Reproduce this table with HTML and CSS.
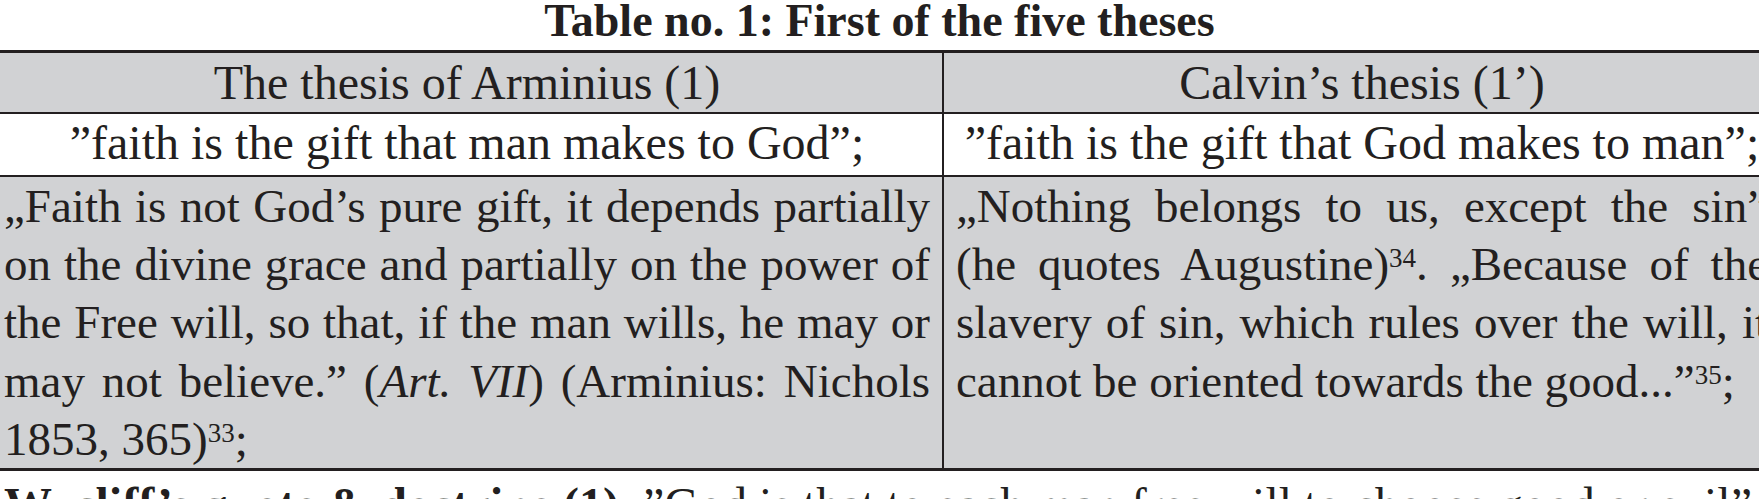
FILE: index.html
```html
<!DOCTYPE html>
<html lang="en">
<head>
<meta charset="utf-8">
<title>Table no. 1: First of the five theses</title>
<link rel="stylesheet" href="styles.css">
</head>
<body>
<div class="page">
  <h1 class="caption">Table no. 1: First of the five theses</h1>
  <div class="tbl">
    <div class="row head">
      <div class="cell">The thesis of Arminius (1)</div>
      <div class="cell">Calvin’s thesis (1’)</div>
    </div>
    <div class="row short">
      <div class="cell">”faith is the gift that man makes to God”;</div>
      <div class="cell">”faith is the gift that God makes to man”;</div>
    </div>
    <div class="row body">
      <div class="cell">
        <span class="ln">„Faith is not God’s pure gift, it depends partially</span>
        <span class="ln">on the divine grace and partially on the power of</span>
        <span class="ln">the Free will, so that, if the man wills, he may or</span>
        <span class="ln">may not believe.” (<i>Art. VII</i>) (Arminius: Nichols</span>
        <span class="ln end">1853, 365)<sup class="fn">33</sup>;</span>
      </div>
      <div class="cell">
        <span class="ln">„Nothing belongs to us, except the sin”</span>
        <span class="ln">(he quotes Augustine)<sup class="fn">34</sup>. „Because of the</span>
        <span class="ln">slavery of sin, which rules over the will, it</span>
        <span class="ln end">cannot be oriented towards the good...”<sup class="fn">35</sup>;</span>
      </div>
    </div>
  </div>
  <p class="after"><b>Wycliff’s quote &amp; doctrine (1).</b> ”God is that to each man free will to choose good or evil”.</p>
</div>
</body>
</html>
```
FILE: styles.css
```css
html, body {
  margin: 0;
  padding: 0;
  background: #ffffff;
}
body {
  color: #231f20;
  font-family: "Liberation Serif", "Times New Roman", serif;
  font-size: 48px;
  overflow: hidden;
}
.page {
  width: 1759px;
  height: 499px;
  overflow: hidden;
}
.caption {
  margin: 0 0 8px;
  font-size: 46px;
  line-height: 42px;
  font-weight: bold;
  text-align: center;
}
.tbl {
  margin-left: -8px;
  width: 1788px;
  border-top: 3px solid #231f20;
}
.row {
  display: grid;
  grid-template-columns: 950px 838px;
}
.cell {
  padding: 0 12px;
}
.cell + .cell {
  border-left: 2px solid #231f20;
}
.head {
  background: #d1d2d4;
  border-bottom: 2px solid #231f20;
}
.head .cell {
  text-align: center;
  line-height: 59px;
}
.short {
  background: #ffffff;
  border-bottom: 2px solid #231f20;
}
.short .cell {
  text-align: center;
  line-height: 57px;
  padding-bottom: 4px;
}
.body {
  background: #d1d2d4;
  border-bottom: 3px solid #231f20;
}
.body .cell {
  font-size: 47px;
  line-height: 58.2px;
}
.ln {
  display: block;
  text-align: justify;
  text-align-last: justify;
  white-space: nowrap;
}
.ln.end {
  text-align-last: left;
}
.fn {
  font-size: 27px;
  vertical-align: 13px;
  line-height: 0;
}
.after {
  margin: 0;
  padding-left: 4px;
  line-height: 67px;
  white-space: nowrap;
}
```
